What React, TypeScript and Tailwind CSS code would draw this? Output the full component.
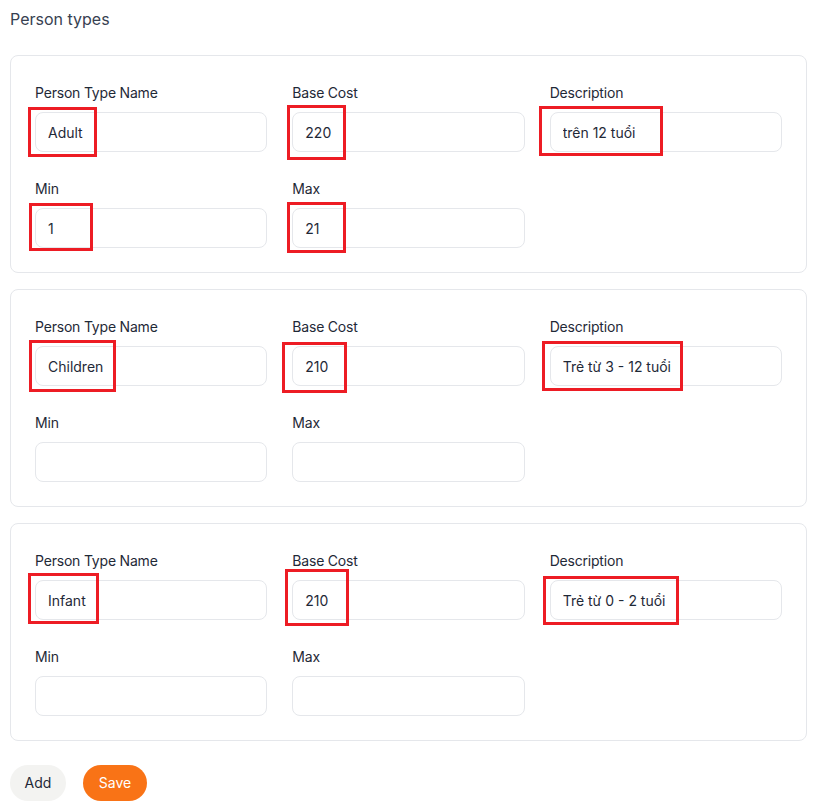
import React from 'react'

type Mark = string // tailwind classes placing the red review box around an input

type Field = {
  label: string
  value: string
  mark?: Mark
}

type PersonType = {
  name: Field
  cost: Field
  desc: Field
  min: Field
  max: Field
}

const personTypes: PersonType[] = [
  {
    name: { label: 'Person Type Name', value: 'Adult', mark: '-left-[7px] -top-[5px] w-[69px] h-[50px]' },
    cost: { label: 'Base Cost', value: '220', mark: '-left-[5px] -top-[7px] w-[59px] h-[55px]' },
    desc: { label: 'Description', value: 'trên 12 tuổi', mark: '-left-[11px] -top-[6px] w-[124px] h-[50px]' },
    min: { label: 'Min', value: '1', mark: '-left-[6px] -top-[5px] w-[64px] h-[48px]' },
    max: { label: 'Max', value: '21', mark: '-left-[5px] -top-[6px] w-[59px] h-[51px]' },
  },
  {
    name: { label: 'Person Type Name', value: 'Children', mark: '-left-[6px] -top-[6px] w-[87px] h-[52px]' },
    cost: { label: 'Base Cost', value: '210', mark: '-left-[10px] -top-[4px] w-[65px] h-[51px]' },
    desc: { label: 'Description', value: 'Trẻ từ 3 - 12 tuổi', mark: '-left-[8px] -top-[5px] w-[141px] h-[50px]' },
    min: { label: 'Min', value: '' },
    max: { label: 'Max', value: '' },
  },
  {
    name: { label: 'Person Type Name', value: 'Infant', mark: '-left-[7px] -top-[7px] w-[71px] h-[51px]' },
    cost: { label: 'Base Cost', value: '210', mark: '-left-[7px] -top-[11px] w-[64px] h-[57px]' },
    desc: { label: 'Description', value: 'Trẻ từ 0 - 2 tuổi', mark: '-left-[7px] -top-[4px] w-[136px] h-[49px]' },
    min: { label: 'Min', value: '' },
    max: { label: 'Max', value: '' },
  },
]

function InputField({ field }: { field: Field }) {
  return (
    <div className="flex flex-col">
      <label className="mb-2 h-6 pt-[2px] text-sm leading-[22px] tracking-[-0.2px] text-[#1f2937]">
        {field.label}
      </label>
      <div className="relative">
        <input
          readOnly
          value={field.value}
          className="h-10 w-full rounded-lg border border-[#e5e7eb] bg-white px-3 text-sm text-[#1f2937] outline-none"
        />
        {/* red review annotation */}
        {field.mark && (
          <div className={`pointer-events-none absolute border-[3px] border-[#ed1c24] ${field.mark}`} />
        )}
      </div>
    </div>
  )
}

export default function App() {
  return (
    <div className="min-h-screen bg-white pl-[10px] pr-[12px] pt-[7px] pb-8 font-['Inter','Noto_Sans',sans-serif]">
      <h2 className="h-6 text-base leading-6 text-[#374151]">Person types</h2>

      <div className="mt-6 flex flex-col gap-4">
        {personTypes.map((pt, i) => (
          <div key={i} className="rounded-lg border border-[#e5e7eb] p-6">
            <div className="grid grid-cols-3 gap-x-[25px] gap-y-6">
              <InputField field={pt.name} />
              <InputField field={pt.cost} />
              <InputField field={pt.desc} />
              <InputField field={pt.min} />
              <InputField field={pt.max} />
            </div>
          </div>
        ))}
      </div>

      <div className="mt-6 flex items-center gap-[17px]">
        <button className="h-9 w-14 rounded-full bg-[#f3f3f1] text-sm text-[#1f2937]">Add</button>
        <button className="h-9 w-16 rounded-full bg-[#f97316] text-sm text-white">Save</button>
      </div>
    </div>
  )
}
